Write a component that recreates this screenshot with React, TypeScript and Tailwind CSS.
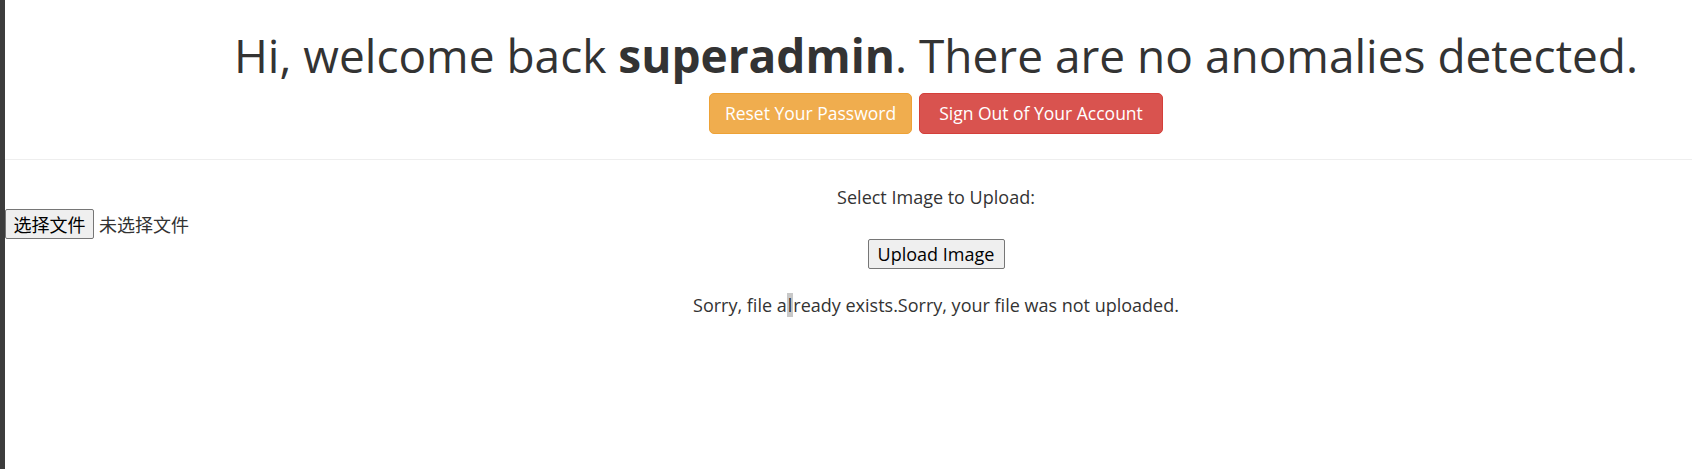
import React from "react";

const sans = { fontFamily: '"Open Sans", "Noto Sans", Arial, sans-serif' };
const cjk = { fontFamily: '"Noto Sans CJK SC", "Noto Sans", sans-serif' };

const Header = () => (
  <div className="pl-[175px] text-center text-[#333]">
    <h1 className="mt-[30px] h-[50px] text-[46px] leading-[50px] font-normal whitespace-nowrap">
      Hi, welcome back <b className="font-bold">superadmin</b>. There are no anomalies detected.
    </h1>
    <div className="mt-[13px] flex justify-center gap-[7px]">
      <button className="w-[203px] h-[41px] rounded-[5px] border border-[#eea236] bg-[#f0ad4e] text-[17.5px] text-white">
        Reset Your Password
      </button>
      <button className="w-[244px] h-[41px] rounded-[5px] border border-[#d43f3a] bg-[#d9534f] text-[17.5px] text-white">
        Sign Out of Your Account
      </button>
    </div>
  </div>
);

const Upload = () => (
  <form className="text-[18px] text-[#333]">
    <p className="pl-[175px] text-center leading-[25px] mt-[25px]">Select Image to Upload:</p>
    <div className="flex items-center gap-[5px] h-[30px] mt-[-1px]" style={cjk}>
      <span className="flex h-[30px] w-[89px] items-center justify-center rounded-[2px] border border-[#767676] bg-[#efefef] text-[18px] text-black">
        选择文件
      </span>
      <span className="text-[18px]">未选择文件</span>
    </div>
    <div className="pl-[175px] flex justify-center">
      <button
        type="button"
        className="h-[30px] w-[137px] rounded-[2px] border border-[#767676] bg-[#efefef] text-[18px] text-black"
      >
        Upload Image
      </button>
    </div>
    <p className="pl-[175px] text-center leading-[25px] mt-[24px]">
      Sorry, file a<span className="bg-[#c8c8c8] px-[1px]">l</span>ready exists.Sorry, your file was not uploaded.
    </p>
  </form>
);

export default function App() {
  return (
    <div className="flex h-[469px] w-full overflow-hidden bg-white" style={sans}>
      <div className="w-[5px] shrink-0 bg-[#3c3c3c]" />
      <div className="flex-1">
        <Header />
        <hr className="mt-[25px] border-t border-[#eee]" />
        <Upload />
      </div>
    </div>
  );
}
